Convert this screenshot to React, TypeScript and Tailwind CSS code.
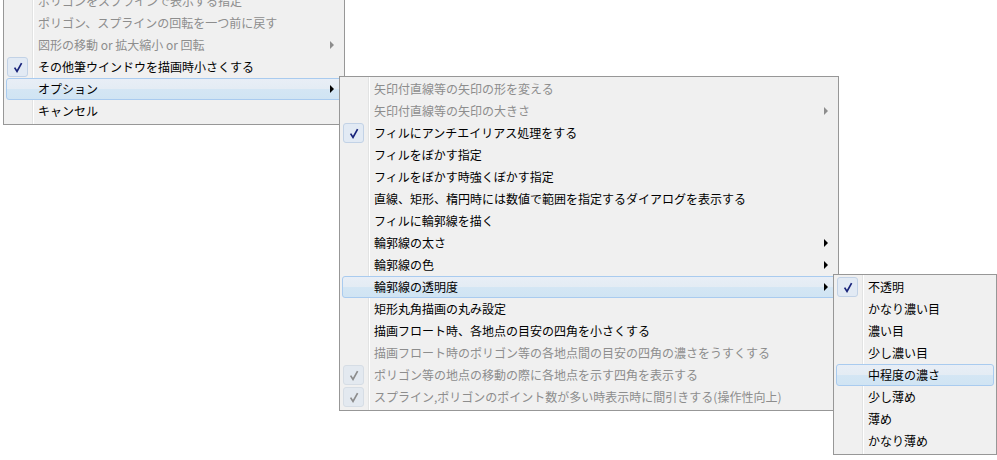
import React from "react";

type Item = {
  label: string;
  disabled?: boolean;
  checked?: boolean;
  sub?: boolean;
  hot?: boolean;
};

function Check({ disabled }: { disabled?: boolean }) {
  return (
    <div
      className={`w-[21px] h-[20px] rounded-[3px] border flex items-center justify-center ${
        disabled ? "border-[#d6dde5] bg-[#e3e9f0]" : "border-[#c2d2e6] bg-[#e2eaf4]"
      }`}
    >
      <svg width="10" height="11" viewBox="0 0 10 11">
        <polyline
          points="1.6,5.6 4,9.4 8.6,1.2"
          fill="none"
          stroke={disabled ? "#8c8c8c" : "#18237a"}
          strokeWidth="1.7"
          strokeLinejoin="miter"
        />
      </svg>
    </div>
  );
}

function Arrow({ disabled }: { disabled?: boolean }) {
  return (
    <svg width="4" height="8" viewBox="0 0 4 8" className="ml-auto mr-[7px] shrink-0">
      <polygon points="0,0 4,4 0,8" fill={disabled ? "#8d8d8d" : "#000"} />
    </svg>
  );
}

function Row({ item }: { item: Item }) {
  return (
    <div
      className={`relative flex items-center h-[22px] rounded-[3px] border ${
        item.hot
          ? "border-[#a9cbef] bg-[linear-gradient(to_bottom,#e8eef6_0%,#e4ecf4_48%,#d4e6f4_52%,#d0e4f3_100%)]"
          : "border-transparent"
      }`}
    >
      <div className="w-[31px] shrink-0 flex items-center">
        {item.checked ? <Check disabled={item.disabled} /> : null}
      </div>
      <span
        className={`whitespace-nowrap text-[12px] leading-[22px] ${
          item.disabled ? "text-[#8d8d8d]" : "text-black"
        }`}
      >
        {item.label}
      </span>
      {item.sub ? <Arrow disabled={item.disabled} /> : null}
    </div>
  );
}

function Menu({ items, className }: { items: Item[]; className: string }) {
  return (
    <div
      className={`absolute bg-[#f0f0f0] border border-[#979797] px-[2px] pt-px pb-[2px] ${className}`}
    >
      <div className="absolute top-0 bottom-0 left-[28px] w-px bg-[#e2e3e3]" />
      <div className="absolute top-0 bottom-0 left-[29px] w-px bg-white" />
      {items.map((it, i) => (
        <Row key={i} item={it} />
      ))}
    </div>
  );
}

const menu1: Item[] = [
  { label: "ポリゴンをスプラインで表示する指定", disabled: true },
  { label: "ポリゴン、スプラインの回転を一つ前に戻す", disabled: true },
  { label: "図形の移動 or 拡大縮小 or 回転", disabled: true, sub: true },
  { label: "その他筆ウインドウを描画時小さくする", checked: true },
  { label: "オプション", sub: true, hot: true },
  { label: "キャンセル" },
];

const menu2: Item[] = [
  { label: "矢印付直線等の矢印の形を変える", disabled: true },
  { label: "矢印付直線等の矢印の大きさ", disabled: true, sub: true },
  { label: "フィルにアンチエイリアス処理をする", checked: true },
  { label: "フィルをぼかす指定" },
  { label: "フィルをぼかす時強くぼかす指定" },
  { label: "直線、矩形、楕円時には数値で範囲を指定するダイアログを表示する" },
  { label: "フィルに輪郭線を描く" },
  { label: "輪郭線の太さ", sub: true },
  { label: "輪郭線の色", sub: true },
  { label: "輪郭線の透明度", sub: true, hot: true },
  { label: "矩形丸角描画の丸み設定" },
  { label: "描画フロート時、各地点の目安の四角を小さくする" },
  { label: "描画フロート時のポリゴン等の各地点間の目安の四角の濃さをうすくする", disabled: true },
  { label: "ポリゴン等の地点の移動の際に各地点を示す四角を表示する", disabled: true, checked: true },
  { label: "スプライン,ポリゴンのポイント数が多い時表示時に間引きする(操作性向上)", disabled: true, checked: true },
];

const menu3: Item[] = [
  { label: "不透明", checked: true },
  { label: "かなり濃い目" },
  { label: "濃い目" },
  { label: "少し濃い目" },
  { label: "中程度の濃さ", hot: true },
  { label: "少し薄め" },
  { label: "薄め" },
  { label: "かなり薄め" },
];

export default function App() {
  return (
    <div className="relative w-[997px] h-[460px] overflow-hidden bg-white font-['Noto_Sans_CJK_JP','Noto_Sans',sans-serif]">
      <Menu items={menu1} className="left-[3px] top-[-12px] w-[342px]" />
      <Menu items={menu2} className="left-[339px] top-[76px] w-[500px]" />
      <Menu items={menu3} className="left-[833px] top-[274px] w-[164px]" />
    </div>
  );
}
